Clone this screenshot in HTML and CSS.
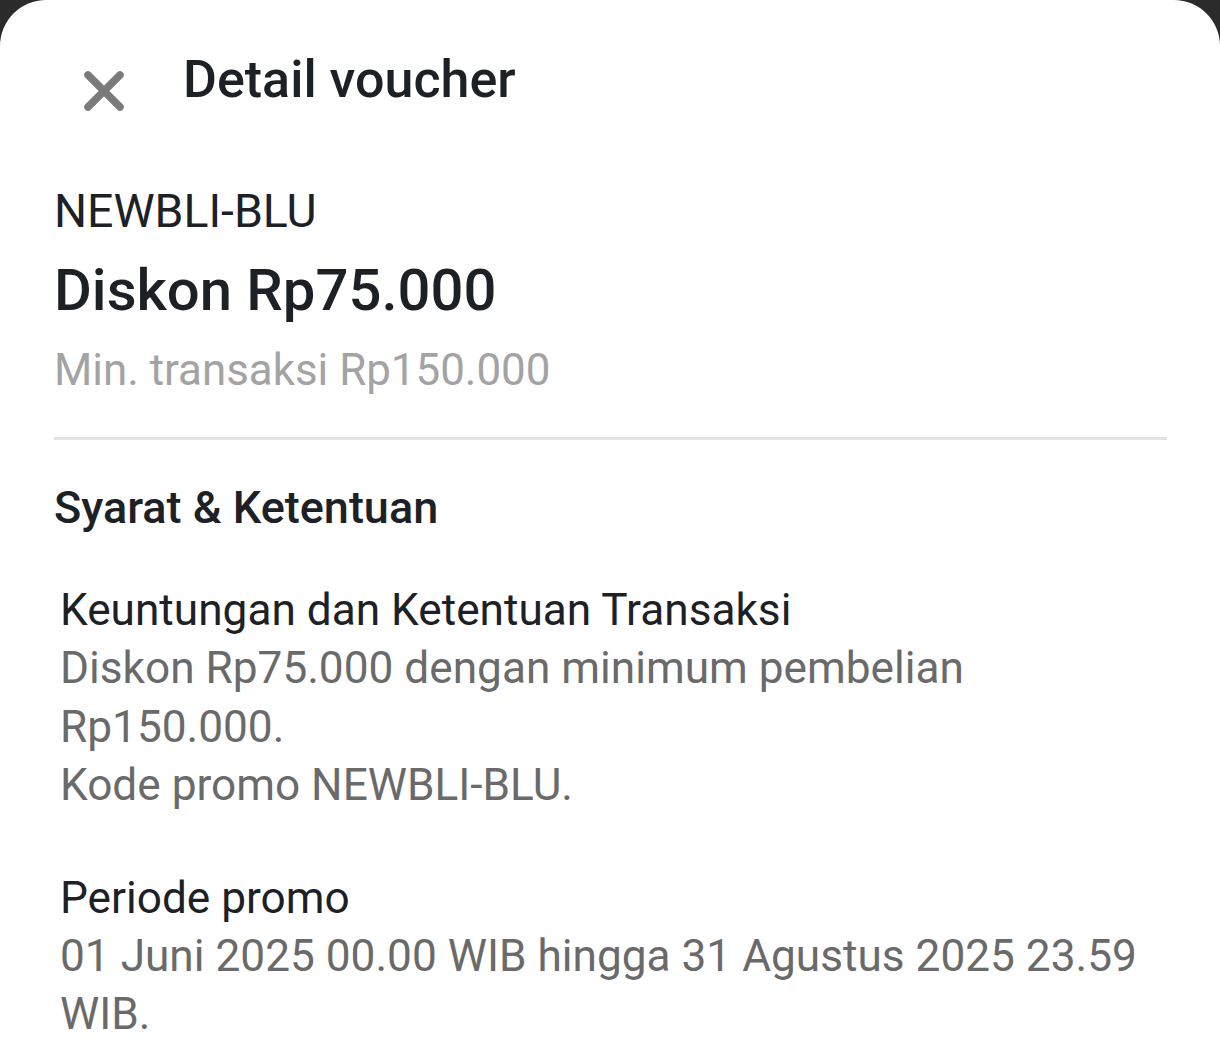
FILE: index.html
```html
<!DOCTYPE html>
<html lang="id">
<head>
<meta charset="utf-8">
<title>Detail voucher</title>
<link rel="stylesheet" href="styles.css">
</head>
<body>
<div class="sheet">
  <header class="header">
    <button class="close" aria-label="Tutup">
      <svg width="42" height="42" viewBox="0 0 42 42"><path d="M5 5 L37 37 M37 5 L5 37" stroke="#7b7b7b" stroke-width="7.5" stroke-linecap="round" fill="none"/></svg>
    </button>
    <h1 class="title">Detail voucher</h1>
  </header>
  <section class="summary">
    <div class="code">NEWBLI-BLU</div>
    <div class="amount">Diskon Rp75.000</div>
    <div class="min">Min. transaksi Rp150.000</div>
  </section>
  <hr class="divider">
  <h2 class="terms-title">Syarat &amp; Ketentuan</h2>
  <section class="terms">
    <div class="block">
      <div class="block-title">Keuntungan dan Ketentuan Transaksi</div>
      <div class="block-text">Diskon Rp75.000 dengan minimum pembelian<br>Rp150.000.<br>Kode promo NEWBLI-BLU.</div>
    </div>
    <div class="block">
      <div class="block-title">Periode promo</div>
      <div class="block-text">01 Juni 2025 00.00 WIB hingga 31 Agustus 2025 23.59<br>WIB.</div>
    </div>
  </section>
</div>
</body>
</html>
```

FILE: styles.css
```css
html, body {
  margin: 0;
  padding: 0;
  background: #2b2b2b;
  height: 100%;
  overflow: hidden;
}
body {
  font-family: Roboto, Inter, "Open Sans", sans-serif;
  color: #1d2125;
}
.sheet {
  background: #ffffff;
  border-radius: 46px 46px 0 0;
  min-height: 1062px;
  padding: 0 53px 0 54px;
  box-sizing: border-box;
}
.header {
  display: flex;
  align-items: flex-start;
  height: 172px;
  padding-top: 50px;
  box-sizing: border-box;
}
.close {
  background: none;
  border: 0;
  padding: 0;
  width: 42px;
  height: 42px;
  margin-left: 29px;
  margin-top: 20px;
  display: flex;
}
.title {
  margin: 0 0 0 58px;
  font-size: 52px;
  font-weight: 500;
  line-height: 60px;
  color: #1d2125;
}
.summary {
  display: flex;
  flex-direction: column;
}
.code {
  font-size: 46.4px;
  font-weight: 400;
  line-height: 78px;
}
.amount {
  font-size: 58px;
  font-weight: 500;
  line-height: 80px;
}
.min {
  font-size: 43.9px;
  color: #a3a3a3;
  line-height: 80px;
}
.divider {
  border: 0;
  height: 3px;
  background: #e2e2e2;
  margin: 27px 0 0 0;
}
.terms-title {
  margin: 38px 0 0 0;
  font-size: 45px;
  font-weight: 500;
  line-height: 60px;
}
.terms {
  padding-left: 6px;
  margin-top: 43px;
}
.block {
  margin-bottom: 54px;
}
.block-title {
  font-size: 44.2px;
  line-height: 58px;
  color: #1d2125;
}
.block-text {
  font-size: 44.2px;
  line-height: 58.5px;
  color: #6a6a6a;
}
```
